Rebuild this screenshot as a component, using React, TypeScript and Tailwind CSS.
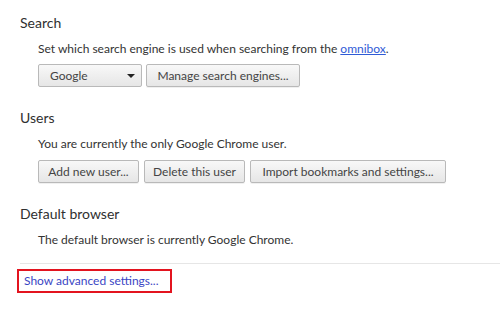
import { ReactNode } from "react";

const font = { fontFamily: '"Segoe UI", Lato, "Open Sans", Arial, sans-serif' };

function Btn({ children, className = "" }: { children: ReactNode; className?: string }) {
  return (
    <button
      className={`h-[23px] whitespace-nowrap rounded-[2px] border border-[#b9b9b9] bg-gradient-to-b from-[#f8f8f8] to-[#e6e6e6] text-[12px] leading-none text-[#444] shadow-[0_1px_0_rgba(0,0,0,0.06)] ${className}`}
    >
      {children}
    </button>
  );
}

function Section({
  title,
  children,
}: {
  title: string;
  children: ReactNode;
}) {
  return (
    <section>
      <h3 className="h-[20px] text-[14px] leading-[20px] text-[#303030]">{title}</h3>
      <div className="pl-[18px] pt-[7px]">{children}</div>
    </section>
  );
}

export default function App() {
  return (
    <div className="h-[319px] w-[500px] overflow-hidden bg-white" style={font}>
      <div className="px-[20px] pt-[13px]">
        <Section title="Search">
          <p className="h-[18px] whitespace-nowrap text-[12px] leading-[18px] text-[#333]">
            Set which search engine is used when searching from the{" "}
            <a className="text-[#2f5bd6] underline">omnibox</a>.
          </p>
          <div className="mt-[6px] flex gap-[4px]">
            <div className="flex h-[23px] w-[104px] items-center justify-between rounded-[2px] border border-[#b9b9b9] bg-gradient-to-b from-[#f8f8f8] to-[#e6e6e6] pl-[11px] pr-[6px] text-[12px] text-[#444]">
              <span>Google</span>
              <svg width="8" height="4" viewBox="0 0 8 4">
                <path d="M0 0h8L4 4z" fill="#222" />
              </svg>
            </div>
            <Btn className="w-[154px]">Manage search engines...</Btn>
          </div>
        </Section>

        <div className="h-[21px]" />

        <Section title="Users">
          <p className="h-[18px] text-[12px] leading-[18px] text-[#333]">
            You are currently the only Google Chrome user.
          </p>
          <div className="mt-[7px] flex gap-[5px]">
            <Btn className="w-[101px]">Add new user...</Btn>
            <Btn className="w-[101px]">Delete this user</Btn>
            <Btn className="w-[196px]">Import bookmarks and settings...</Btn>
          </div>
        </Section>

        <div className="h-[21px]" />

        <Section title="Default browser">
          <p className="h-[18px] text-[12px] leading-[18px] text-[#333]">
            The default browser is currently Google Chrome.
          </p>
        </Section>
      </div>

      <div className="ml-[20px] mt-[14px] border-t border-[#e6e6e6]" />

      <div className="ml-[17px] mt-[5px] flex h-[24px] w-[155px] items-center border-2 border-[#e3141f] pl-[5px]">
        <a className="whitespace-nowrap text-[12px] text-[#3a45c4]">Show advanced settings...</a>
      </div>
    </div>
  );
}
